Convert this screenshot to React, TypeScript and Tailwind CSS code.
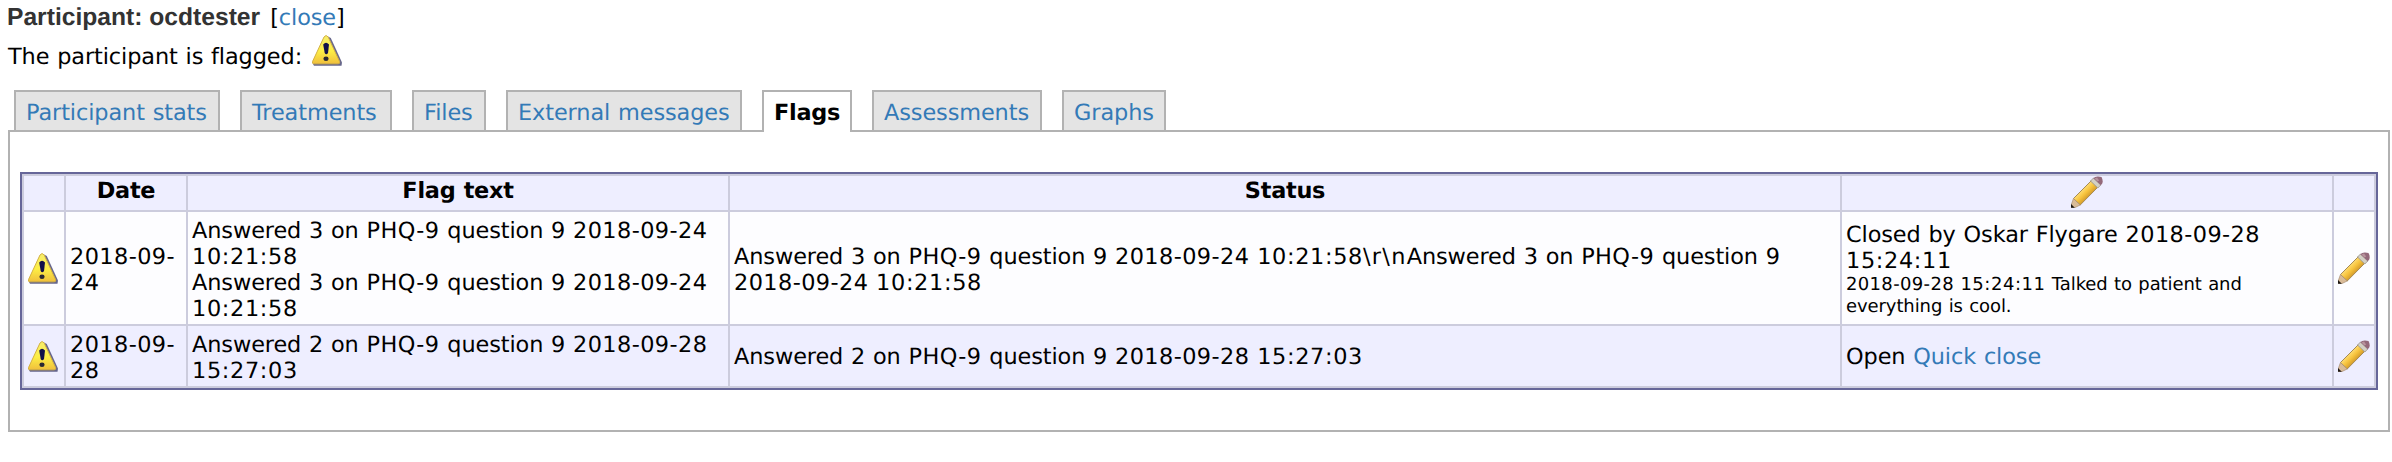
import type { ReactNode } from "react";

function WarningIcon({ className = "" }: { className?: string }) {
  return (
    <svg viewBox="1 0 32 32" className={"h-8 w-8 " + className} aria-hidden="true">
      <defs>
        <linearGradient id="warn" x1="0" y1="0" x2="0" y2="1">
          <stop offset="0" stopColor="#f6ee6c" />
          <stop offset="0.55" stopColor="#fdee45" />
          <stop offset="1" stopColor="#f0bf3c" />
        </linearGradient>
      </defs>
      <path d="M17 2.5 L19.8 4 L31 28.5 L30.5 31.8 H3 L2 30 Z" fill="#4c4c78" opacity="0.85" />
      <path
        d="M13 3 Q15 0 17.2 3 L28.6 27.6 Q29.2 29.8 27.2 29.8 H2.8 Q0.8 29.8 1.5 27.6 Z"
        fill="url(#warn)"
        stroke="#d3b043"
        strokeWidth="1"
      />
      <path d="M12.2 10.5 Q15 6.8 18 10.5 L17 19 Q15.2 21.5 13.7 19 Z" fill="#11104a" />
      <ellipse cx="15" cy="24.8" rx="2.6" ry="2.2" fill="#2b2733" />
    </svg>
  );
}

function PencilIcon({ className = "" }: { className?: string }) {
  return (
    <svg viewBox="0 0 32 32" className={"h-8 w-8 " + className} aria-hidden="true">
      <defs>
        <linearGradient id="wood" x1="0.25" y1="0.25" x2="0.75" y2="0.75">
          <stop offset="0.2" stopColor="#ffdf78" />
          <stop offset="0.5" stopColor="#f7c33c" />
          <stop offset="0.85" stopColor="#cb9228" />
        </linearGradient>
      </defs>
      <path d="M2.5 22.5 L20.5 4.5 L26.8 11.2 L9.2 29 Z" fill="url(#wood)" stroke="#a58a55" strokeWidth="1" />
      <path d="M19.5 5 L22.5 2 L29.8 9 L26.8 12 Z" fill="#d3d0c4" stroke="#97938c" strokeWidth="0.8" />
      <path d="M22.3 2.2 Q24 0.3 27 0.4 L30.5 1 Q32.4 4.5 31.2 7.6 L29.8 9.2 Z" fill="#94697a" />
      <path d="M23.5 2.6 L26 1.4 L28.2 4.4 L26.4 5.6 Z" fill="#b7929c" />
      <path d="M2.5 22.5 L9.2 29 L4 31.5 L0.5 31.5 L0.5 28 Z" fill="#d9bb98" stroke="#a98f74" strokeWidth="0.7" />
      <path d="M0 28 L3.8 31.8 H0 Z" fill="#1c1712" />
    </svg>
  );
}

const Day = ({ children }: { children: ReactNode }) => <span className="tracking-[0.0186em]">{children}</span>;
const Clock = ({ children }: { children: ReactNode }) => <span className="tracking-[0.0295em]">{children}</span>;

const tabs = [
  { label: "Participant stats", width: "w-[206px]" },
  { label: "Treatments", width: "w-[152px]" },
  { label: "Files", width: "w-[74px]" },
  { label: "External messages", width: "w-[236px]" },
  { label: "Flags", width: "w-[90px]", active: true },
  { label: "Assessments", width: "w-[170px]" },
  { label: "Graphs", width: "w-[104px]" },
];

function Tabs() {
  return (
    <nav className="mt-[26px] ml-[14px] flex h-[42px] gap-5">
      {tabs.map((tab) =>
        tab.active ? (
          <a
            key={tab.label}
            className={
              "z-10 h-[42px] border-x-2 border-t-2 border-[#b2b2b2] bg-white pl-[10px] pt-2 font-bold tracking-[-0.012em] whitespace-nowrap text-black " +
              tab.width
            }
          >
            {tab.label}
          </a>
        ) : (
          <a
            key={tab.label}
            className={
              "h-10 border-x-2 border-t-2 border-[#b2b2b2] bg-[#e4e4e4] pl-[10px] pt-2 whitespace-nowrap text-[#337ab7] " +
              tab.width
            }
          >
            {tab.label}
          </a>
        ),
      )}
    </nav>
  );
}

function FlagTable() {
  return (
    <table className="w-[2358px] table-fixed border-separate border-spacing-[2px] border-2 border-[#666699] bg-[#ccccdd] text-left">
      <colgroup>
        <col className="w-[40px]" />
        <col className="w-[120px]" />
        <col className="w-[540px]" />
        <col className="w-[1110px]" />
        <col className="w-[490px]" />
        <col className="w-[40px]" />
      </colgroup>
      <thead>
        <tr className="h-[34px] bg-[#eeeeff] text-center tracking-[-0.012em]">
          <th className="p-0" />
          <th className="p-0 pt-[2px] align-top">Date</th>
          <th className="p-0 pt-[2px] align-top">Flag text</th>
          <th className="p-0 pt-[2px] align-top">Status</th>
          <th className="p-0 align-top">
            <PencilIcon className="mx-auto block" />
          </th>
          <th className="p-0" />
        </tr>
      </thead>
      <tbody>
        <tr className="h-[112px] bg-[#fdfdff]">
          <td className="p-0 pl-1">
            <WarningIcon className="block" />
          </td>
          <td className="pt-1 pr-0 pb-0 pl-1">
            <Day>2018-09-</Day>
            <br />
            <Day>24</Day>
          </td>
          <td className="pt-1 pr-0 pb-0 pl-1">
            Answered 3 on <Day>PHQ-9</Day> question 9 <Day>2018-09-24</Day>
            <br />
            <Clock>10:21:58</Clock>
            <br />
            Answered 3 on <Day>PHQ-9</Day> question 9 <Day>2018-09-24</Day>
            <br />
            <Clock>10:21:58</Clock>
          </td>
          <td className="pt-1 pr-0 pb-0 pl-1">
            Answered 3 on <Day>PHQ-9</Day> question 9 <Day>2018-09-24</Day> <Clock>10:21:58</Clock>
            <span className="tracking-[0.058em]">\r\n</span>Answered 3 on <Day>PHQ-9</Day> question 9
            <br />
            <Day>2018-09-24</Day> <Clock>10:21:58</Clock>
          </td>
          <td className="pt-1 pr-0 pb-0 pl-1">
            <div>
              Closed by Oskar Flygare <Day>2018-09-28</Day>
              <br />
              <Clock>15:24:11</Clock>
            </div>
            <div className="text-[18px] leading-[22px]">
              <Day>2018-09-28</Day> <Clock>15:24:11</Clock> Talked to patient and
              <br />
              everything is cool.
            </div>
          </td>
          <td className="p-0 pl-1">
            <PencilIcon className="block" />
          </td>
        </tr>
        <tr className="h-[60px] bg-[#eeeeff]">
          <td className="p-0 pl-1">
            <WarningIcon className="block" />
          </td>
          <td className="pt-1 pr-0 pb-0 pl-1">
            <Day>2018-09-</Day>
            <br />
            <Day>28</Day>
          </td>
          <td className="pt-1 pr-0 pb-0 pl-1">
            Answered 2 on <Day>PHQ-9</Day> question 9 <Day>2018-09-28</Day>
            <br />
            <Clock>15:27:03</Clock>
          </td>
          <td className="pt-[2px] pr-0 pb-0 pl-1">
            Answered 2 on <Day>PHQ-9</Day> question 9 <Day>2018-09-28</Day> <Clock>15:27:03</Clock>
          </td>
          <td className="pt-[2px] pr-0 pb-0 pl-1">
            Open <a className="text-[#337ab7]">Quick close</a>
          </td>
          <td className="p-0 pl-1">
            <PencilIcon className="block" />
          </td>
        </tr>
      </tbody>
    </table>
  );
}

export default function App() {
  return (
    <div className="h-[462px] w-[2392px] overflow-hidden bg-white font-['Verdana','DejaVu_Sans',sans-serif] text-[22.4px] leading-[26px] tracking-[-0.004em] text-black [text-rendering:geometricPrecision] [word-spacing:0.034em]">
      <header className="h-16 pl-2">
        <div className="flex h-8 items-baseline gap-[10px] pt-[3px]">
          <h1 className="-ml-px font-['Liberation_Sans',Arial,sans-serif] text-[24.64px] leading-[30px] font-bold tracking-normal text-[#333333] [word-spacing:0]">
            Participant: ocdtester
          </h1>
          <span>
            [<a className="text-[#337ab7]">close</a>]
          </span>
        </div>
        <div className="flex h-8 items-start">
          <span className="pt-3">The participant is flagged:</span>
          <WarningIcon className="mt-[2px] ml-[10px]" />
        </div>
      </header>
      <Tabs />
      <main className="-mt-[2px] ml-2 h-[302px] w-[2382px] border-2 border-[#b2b2b2] pt-10 pl-[10px]">
        <FlagTable />
      </main>
    </div>
  );
}
